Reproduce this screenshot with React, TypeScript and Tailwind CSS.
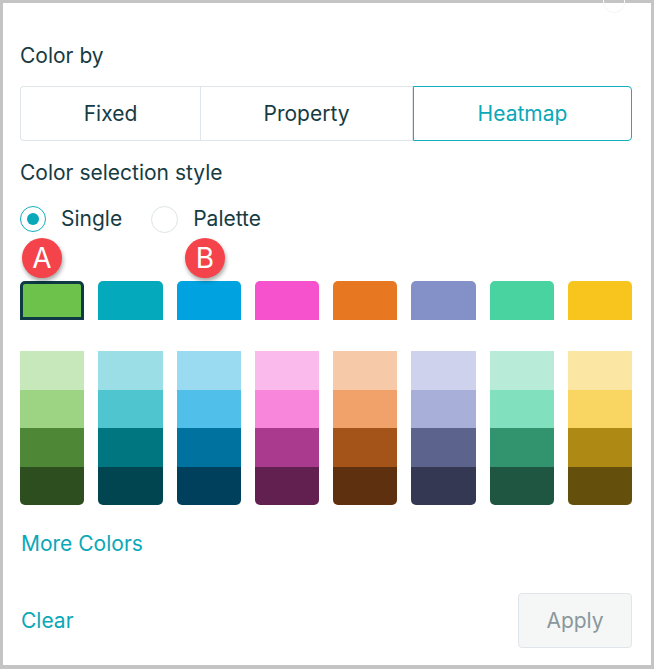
const swatches = ['#6cc24a', '#05a9bc', '#00a3e0', '#f652cd', '#e87722', '#8490c8', '#48d3a0', '#f7c51e'];

const palettes = [
  ['#c6e8bb', '#9dd484', '#4e8735', '#2d4e1f'],
  ['#9bdee5', '#4fc5d0', '#007680', '#00454f'],
  ['#9adbf2', '#50bfea', '#0072a0', '#00405c'],
  ['#fabaec', '#f886db', '#aa3a8e', '#612050'],
  ['#f6caa8', '#f0a26a', '#a45319', '#5e300f'],
  ['#ced2ec', '#a8b0da', '#5c638d', '#353853'],
  ['#b8ecd9', '#81e0be', '#32946f', '#1e5641'],
  ['#fbe6a3', '#f9d662', '#ae8914', '#644f0c'],
];

const Badge = ({ letter, className }: { letter: string; className: string }) => (
  <div
    className={`absolute w-[40px] h-[40px] rounded-full bg-[#f4434a] text-white text-[28px] leading-none flex items-center justify-center shadow-[1px_3px_4px_rgba(0,0,0,0.35)] ${className}`}
  >
    {letter}
  </div>
);

const App = () => {
  return (
    <div className="w-[654px] h-[669px] bg-[#c4c4c4] pl-[3px] pt-[3px] pr-[3px] pb-[4px] font-['Inter',sans-serif]">
      <div className="relative w-full h-full bg-white pl-[17px] pr-[19px] pt-[41px] text-[#173b43]">
        <div className="absolute top-[-6px] right-[26px] w-[22px] h-[16px] rounded-b-full border border-t-0 border-[#f6f7f7]" />

        <p className="text-[21px] leading-[24px]">Color by</p>

        <div className="mt-[18px] flex h-[55px] text-[21px]">
          <button className="w-[180px] border border-r-0 border-[#dfe5e8] rounded-l-[4px] flex items-center justify-center">
            Fixed
          </button>
          <button className="w-[213px] border border-[#dfe5e8] flex items-center justify-center">
            Property
          </button>
          <button className="flex-1 border border-[#14aebd] rounded-r-[4px] text-[#0aa8b8] flex items-center justify-center">
            Heatmap
          </button>
        </div>

        <p className="mt-[20px] text-[21px] leading-[24px]">Color selection style</p>

        <div className="mt-[21px] flex items-center h-[26px] text-[21px]">
          <div className="w-[26px] h-[26px] rounded-full border border-[#14aebd] flex items-center justify-center">
            <div className="w-[12px] h-[12px] rounded-full bg-[#0aa8b8]" />
          </div>
          <span className="ml-[15px]">Single</span>
          <div className="ml-[29px] w-[27px] h-[27px] rounded-full border border-[#dce4e6]" />
          <span className="ml-[15px]">Palette</span>
        </div>

        <div className="relative mt-[49px] grid grid-cols-8 gap-[14px]">
          <Badge letter="A" className="left-[2px] top-[-43px]" />
          <Badge letter="B" className="left-[165px] top-[-43px]" />
          {swatches.map((c, i) => (
            <div
              key={c}
              className={`h-[39px] rounded-t-[5px] ${i === 0 ? 'border-[3px] border-[#0d3a44]' : ''}`}
              style={{ backgroundColor: c }}
            />
          ))}
        </div>

        <div className="mt-[31px] grid grid-cols-8 gap-[14px]">
          {palettes.map((p) => (
            <div key={p[0]} className="flex flex-col rounded-b-[5px] overflow-hidden">
              {p.map((c) => (
                <div key={c} className="h-[38.5px]" style={{ backgroundColor: c }} />
              ))}
            </div>
          ))}
        </div>

        <p className="mt-[27px] ml-[1px] text-[21px] leading-[24px] text-[#0aa8b8]">More Colors</p>

        <div className="mt-[37px] flex items-center justify-between">
          <span className="ml-[1px] text-[21px] text-[#0aa8b8]">Clear</span>
          <button className="w-[114px] h-[55px] rounded-[4px] border border-[#dfe5e8] bg-[#f5f7f7] text-[21px] text-[#8a979c]">
            Apply
          </button>
        </div>
      </div>
    </div>
  );
};

export default App;
